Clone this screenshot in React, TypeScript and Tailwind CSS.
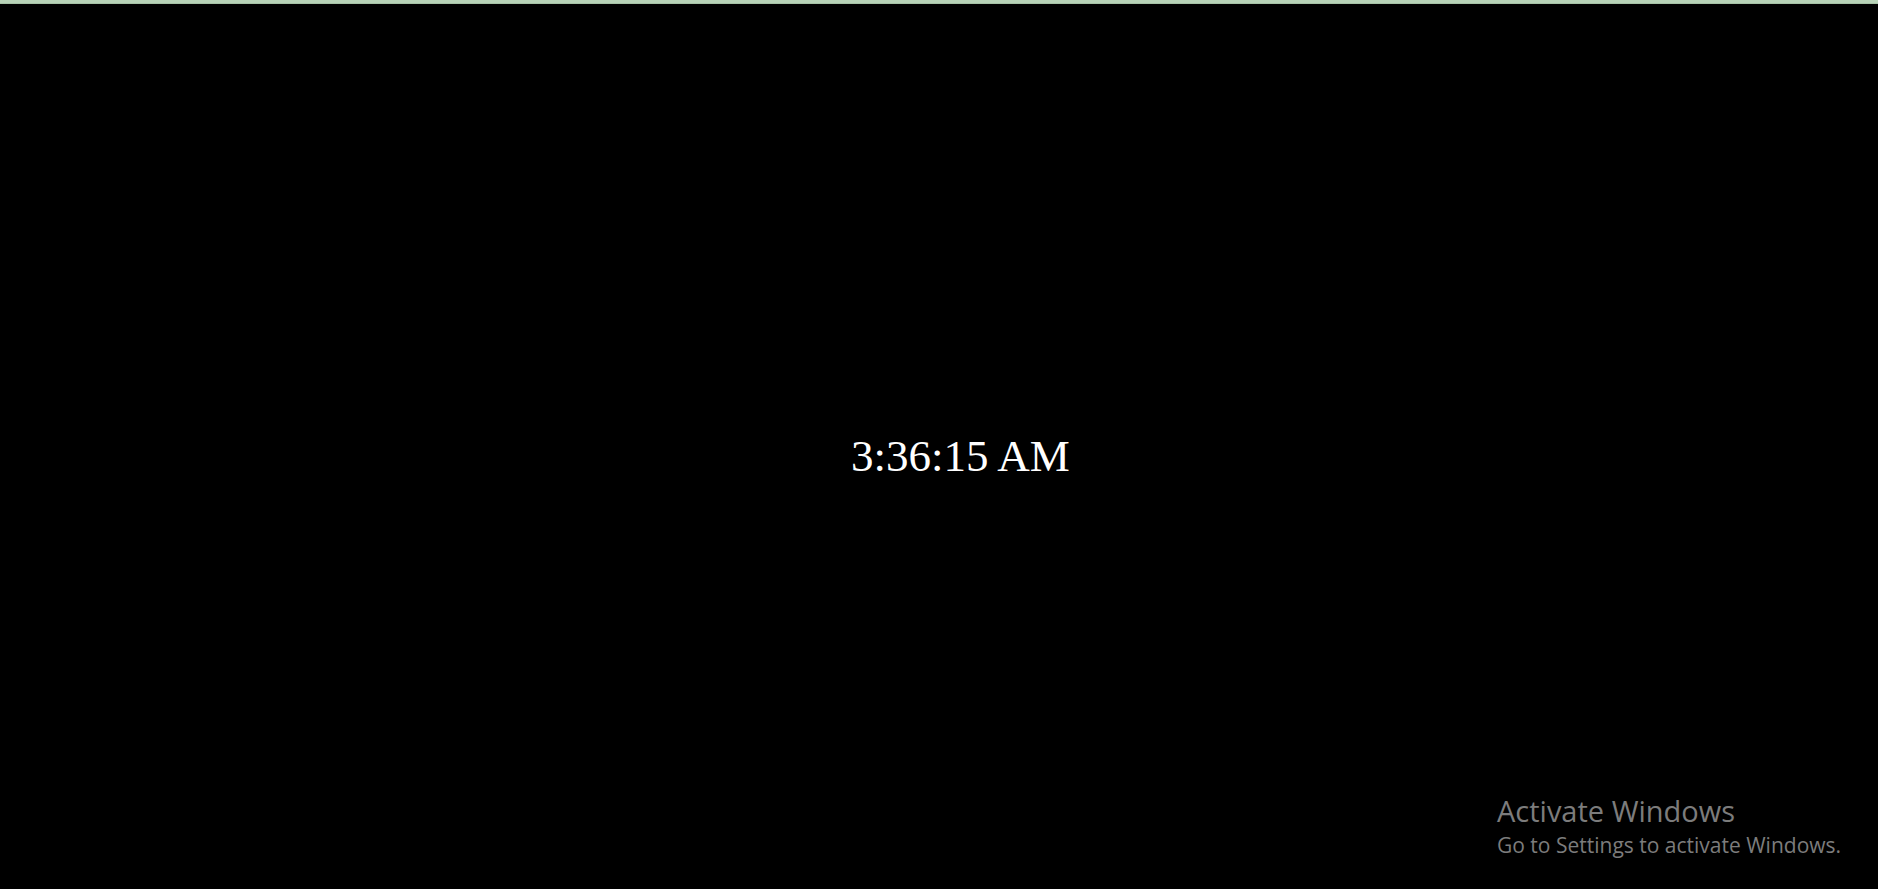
export default function App() {
  return (
    <div className="relative flex h-[889px] w-full flex-col overflow-hidden bg-black">
      {/* top edge */}
      <div className="h-[3px] w-full bg-[#b8d3b8]" />
      <div className="h-px w-full bg-[#a6c2a6]" />

      {/* clock */}
      <div className="flex flex-1 items-center justify-center pl-[43px] pt-[20px]">
        <p className="font-['Liberation_Serif','Times_New_Roman',serif] text-[45px] leading-none text-white">
          3:36:15 AM
        </p>
      </div>

      {/* watermark */}
      <div className="absolute bottom-[31px] left-[1497px] flex flex-col font-['Open_Sans','Noto_Sans',sans-serif] text-[#7c7c7c]">
        <span className="text-[29px] leading-[42px]">Activate Windows</span>
        <span className="text-[21px] leading-[26px]">Go to Settings to activate Windows.</span>
      </div>
    </div>
  );
}
